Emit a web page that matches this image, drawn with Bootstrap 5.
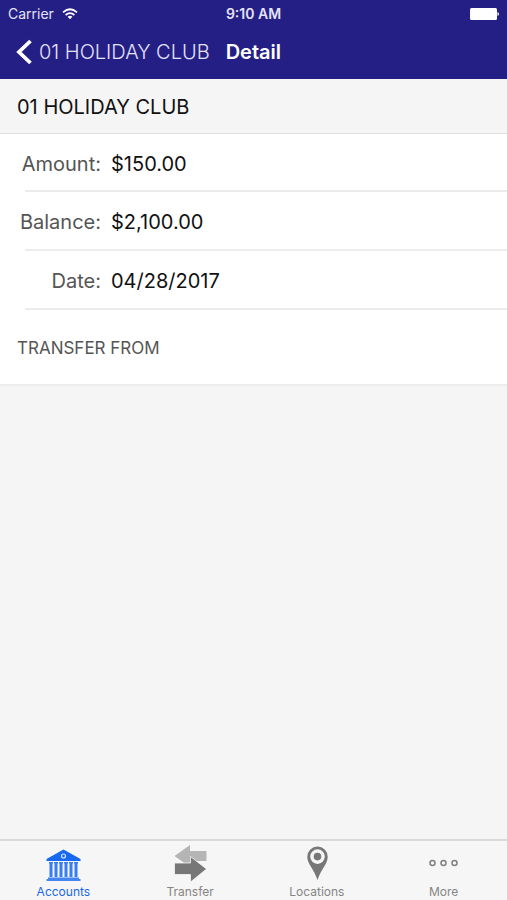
<!DOCTYPE html>
<html lang="en">
<head>
<meta charset="utf-8">
<meta name="viewport" content="width=device-width, initial-scale=1">
<title>Detail</title>
<link href="https://cdn.jsdelivr.net/npm/bootstrap@5.3.0/dist/css/bootstrap.min.css" rel="stylesheet">
<style>
body { font-family: Inter, "Liberation Sans", sans-serif; background: #f5f5f5; color: #111; }
.app-header { background: #241f85; color: #fff; }
.status-bar { height: 28px; font-size: 14px; line-height: 20px; padding: 0 8px; color: #e4e3f6; }
.status-bar .side { flex: 1 1 0; }
.clock { font-weight: 600; }
.title-bar { height: 51px; padding: 0 16px 3px; gap: 16px; font-size: 20px; line-height: 24px; }
.back-link { color: #e4e3f8; gap: 7px; font-weight: 300; }
.page-name { font-size: 20px; line-height: 24px; font-weight: 600; }
.account-name { height: 55px; padding: 2px 17px 0; font-size: 20px; font-weight: 400; border-bottom: 1px solid #dedede; }
.details { background: #fff; border-bottom: 2px solid #ededed; }
.detail-row { height: 59px; margin-left: 25px; padding-top: 3px; border-bottom: 2px solid #ececec; font-size: 20px; gap: 10px; }
.detail-row:first-child { height: 58px; }
.detail-row dt { width: 80px; margin-left: -4px; font-weight: 400; color: #555; display: flex; justify-content: flex-end; white-space: nowrap; }
.section-label { height: 74px; padding: 2px 17px 0; font-size: 17px; font-weight: 400; color: #555; }
.tab-bar { background: #f6f6f6; border-top: 2px solid #d9d9d9; height: 61px; }
.tab-bar a { color: #858585; font-size: 12px; line-height: 16px; padding-top: 3px; }
.tab-bar a.active { color: #1769e8; }
</style>
<script src="https://cdn.jsdelivr.net/npm/bootstrap@5.3.0/dist/js/bootstrap.bundle.min.js" defer></script>
</head>
<body class="d-flex flex-column min-vh-100">
<header class="app-header">
  <div class="status-bar d-flex align-items-center">
    <div class="side d-flex align-items-center gap-2">
      <span>Carrier</span>
      <svg width="16" height="12" viewBox="0 0 16 12" fill="none" stroke="#fff" stroke-width="1.7" aria-hidden="true"><path d="M1 4.3Q8-1.8 15 4.3M3.6 7Q8 3.2 12.4 7"/><path d="M5.6 8.7Q8 6.7 10.4 8.7L8 11.2Z" fill="#fff" stroke="none"/></svg>
    </div>
    <span class="clock">9:10 AM</span>
    <div class="side d-flex justify-content-end">
      <svg width="30" height="13" viewBox="0 0 30 13" fill="#fff" aria-hidden="true"><rect x="1" width="27" height="12" rx="1.5"/><path d="M28.5 4Q30 4.3 30 6T28.5 8Z"/></svg>
    </div>
  </div>
  <nav class="title-bar d-flex align-items-center" aria-label="Title">
    <a href="#" class="back-link d-flex align-items-center text-decoration-none">
      <svg width="16" height="26" viewBox="0 0 16 26" fill="none" stroke="#fff" stroke-width="3.8" aria-hidden="true"><path d="M14.500 2L3 13L14.500 24"/></svg>
      <span>01 HOLIDAY CLUB</span>
    </a>
    <h1 class="page-name m-0">Detail</h1>
  </nav>
</header>
<main class="flex-grow-1">
  <h2 class="account-name d-flex align-items-center m-0">01 HOLIDAY CLUB</h2>
  <section class="details">
    <dl class="m-0">
      <div class="detail-row d-flex align-items-center"><dt>Amount:</dt><dd class="m-0">$150.00</dd></div>
      <div class="detail-row d-flex align-items-center"><dt>Balance:</dt><dd class="m-0">$2,100.00</dd></div>
      <div class="detail-row d-flex align-items-center"><dt>Date:</dt><dd class="m-0">04/28/2017</dd></div>
    </dl>
    <h3 class="section-label d-flex align-items-center m-0">TRANSFER FROM</h3>
  </section>
</main>
<nav class="tab-bar nav nav-fill flex-nowrap sticky-bottom" aria-label="Main">
  <a href="#" class="active col-3 d-flex flex-column align-items-center text-decoration-none" aria-current="page">
    <svg width="36" height="40" viewBox="0 0 36 40" fill="#1769f0" aria-hidden="true"><path d="M18.500 5.500L35.500 15V17H1.500V15Z"/><circle cx="18.500" cy="12" r="2" fill="none" stroke="#d5e5ff" stroke-width="1.2"/><path d="M4 18H8V19.500H7.500V33H4.500V19.500H4ZM9 18H13V19.500H12.500V33H9.500V19.500H9ZM14 18H18V19.500H17.500V33H14.500V19.500H14ZM19 18H23V19.500H22.500V33H19.500V19.500H19ZM24 18H28V19.500H27.500V33H24.500V19.500H24ZM29 18H33V19.500H32.500V33H29.500V19.500H29Z" opacity=".85"/><path d="M3 33.500H34V35H35.500V37H1.500V35H3Z" opacity=".8"/></svg>
    <span>Accounts</span>
  </a>
  <a href="#" class="col-3 d-flex flex-column align-items-center text-decoration-none">
    <svg width="34" height="40" viewBox="0 0 34 40" aria-hidden="true"><path d="M1.500 12L17 1V7H33.500V17H17V23Z" fill="#b5b5b5"/><path d="M33.500 25L17.500 12.500V19H1.500V30.500H17.500V38Z" fill="#777" stroke="#f6f6f6" stroke-width=".8"/></svg>
    <span>Transfer</span>
  </a>
  <a href="#" class="col-3 d-flex flex-column align-items-center text-decoration-none">
    <svg width="24" height="40" viewBox="0 0 24 40" fill="#777" aria-hidden="true"><path fill-rule="evenodd" d="M12.500 2.500A10.200 10.200 0 0 0 2.300 12.700C2.300 20 9 25 12.500 36C16 25 22.700 20 22.700 12.700A10.200 10.200 0 0 0 12.500 2.500ZM12.500 5.300A7.300 7.300 0 1 1 12.500 19.900A7.300 7.300 0 0 1 12.500 5.300Z"/><circle cx="12.500" cy="12.600" r="3.800"/></svg>
    <span>Locations</span>
  </a>
  <a href="#" class="col-3 d-flex flex-column align-items-center text-decoration-none">
    <svg width="32" height="40" viewBox="0 0 32 40" fill="none" stroke="#808080" stroke-width="1.500" aria-hidden="true"><circle cx="4.500" cy="19" r="2.500"/><circle cx="15.500" cy="19" r="2.500"/><circle cx="26.500" cy="19" r="2.500"/></svg>
    <span>More</span>
  </a>
</nav>
</body>
</html>
